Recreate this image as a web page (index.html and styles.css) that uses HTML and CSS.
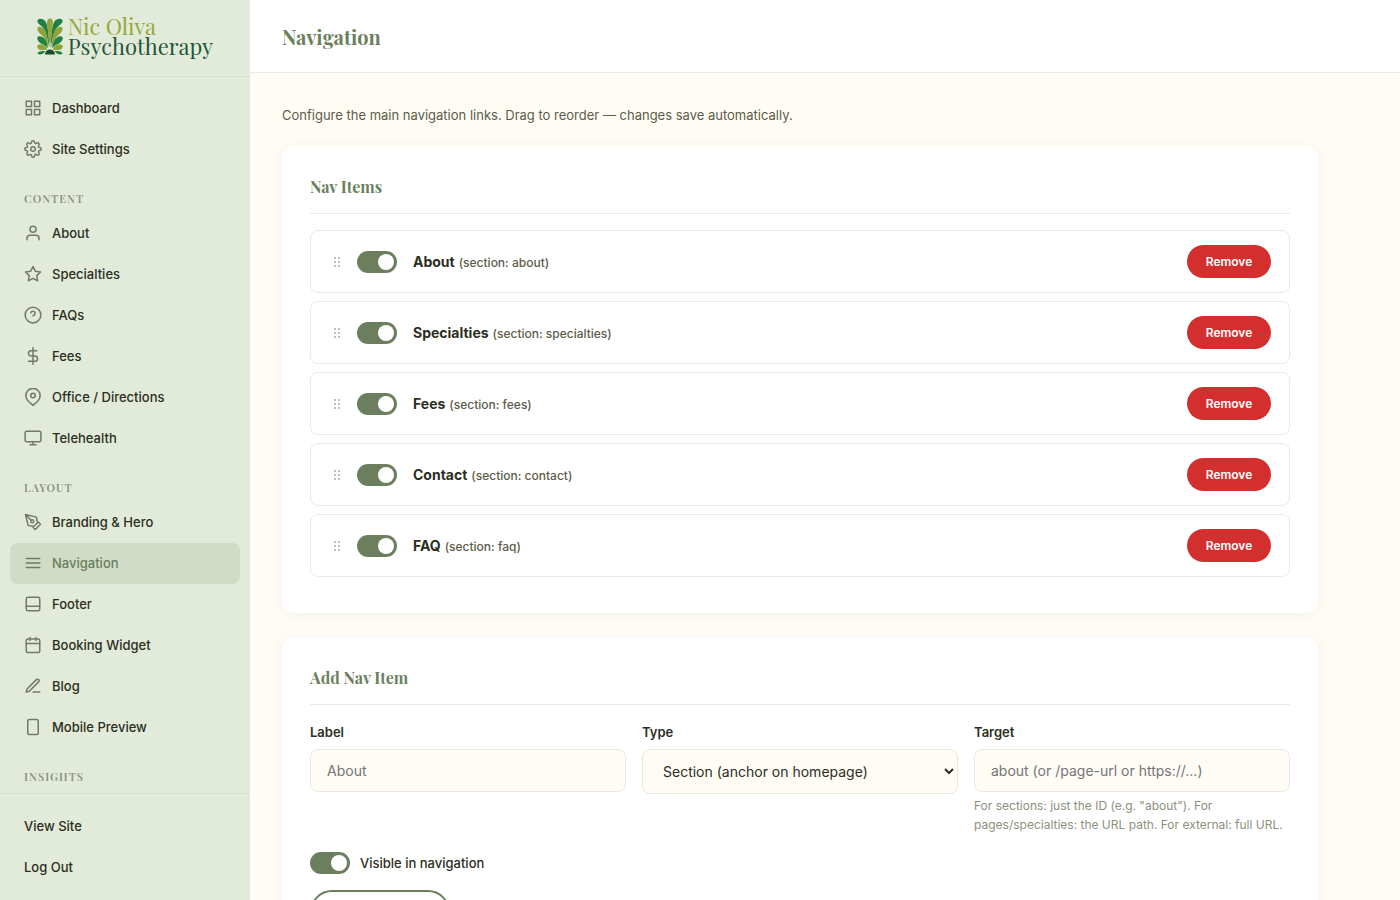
FILE: index.html
```html
<!DOCTYPE html>
<html lang="en">
<head>
<meta charset="utf-8">
<meta name="viewport" content="width=device-width, initial-scale=1">
<title>Navigation</title>
<link rel="stylesheet" href="styles.css">
</head>
<body>
<div class="layout">
  <aside class="sidebar">
    <a class="brand" href="#">
      <svg class="brand-mark" viewBox="0 0 26 37" aria-hidden="true">
        <defs>
          <g id="petals">
            <path class="leaf" d="M.5 2.500C1.500 -.2 6.500 .2 8.500 3.500C11.500 8 11.800 20 12.300 30C10.500 20 9 13 5.500 9C3 6 0 5.500 .5 2.500Z"/>
            <path class="olive" d="M.5 10C1.500 7.500 6 8.500 8.300 12.500C10.300 17 11 24 11.600 30C9.500 24 8 20 5 17.500C2.500 15.500 -.3 13 .5 10Z"/>
            <path class="leaf" d="M.5 19C2.500 17 7 19 8.900 22.500C10.200 25.500 10.500 28 11 30.500C9 28 7.500 27 5 26C2 24.500 -.5 21.500 .5 19Z"/>
            <path class="olive" d="M.5 27.500C3 25 7.500 26.500 9 29C9.600 30 9.900 31 9.800 32C7.500 31.700 5.500 32.400 3.500 32C1 31.500 -.3 29.500 .5 27.500Z"/>
            <path class="leaf" d="M.5 36C.5 33.500 4 32.500 8.500 33.200L7.200 34.500C5 36.700 3 36.700 .5 36Z"/>
          </g>
        </defs>
        <use href="#petals"/>
        <use href="#petals" transform="matrix(-1 0 0 1 26 0)"/>
        <path class="olive" d="M13 .5C16.300 .5 16.300 5 15.500 9L13 30L10.500 9C9.700 5 9.700 .5 13 .5Z"/>
        <path class="pine" d="M8 36.500A5 5 0 0 1 18 36.500Z"/>
      </svg>
      <span class="brand-text"><span class="brand-name">Nic Oliva</span><span class="brand-field">Psychotherapy</span></span>
    </a>
    <nav class="menu">
      <a class="link" href="#"><svg class="icon" viewBox="0 0 24 24"><rect x="3" y="3" width="7" height="7"/><rect x="14" y="3" width="7" height="7"/><rect x="14" y="14" width="7" height="7"/><rect x="3" y="14" width="7" height="7"/></svg>Dashboard</a>
      <a class="link" href="#"><svg class="icon" viewBox="0 0 24 24"><circle cx="12" cy="12" r="3"/><path d="M19.400 15a1.650 1.650 0 0 0 .33 1.820l.06.06a2 2 0 0 1-2.830 2.830l-.06-.06a1.650 1.650 0 0 0-1.820-.33 1.650 1.650 0 0 0-1 1.510V21a2 2 0 0 1-4 0v-.09A1.650 1.650 0 0 0 9 19.400a1.650 1.650 0 0 0-1.820.33l-.06.06a2 2 0 0 1-2.830-2.830l.06-.06a1.650 1.650 0 0 0 .33-1.820 1.650 1.650 0 0 0-1.510-1H3a2 2 0 0 1 0-4h.09A1.650 1.650 0 0 0 4.600 9a1.650 1.650 0 0 0-.33-1.820l-.06-.06a2 2 0 0 1 2.830-2.830l.06.06a1.650 1.650 0 0 0 1.820.33H9a1.650 1.650 0 0 0 1-1.510V3a2 2 0 0 1 4 0v.09a1.650 1.650 0 0 0 1 1.510 1.650 1.650 0 0 0 1.820-.33l.06-.06a2 2 0 0 1 2.830 2.830l-.06.06a1.650 1.650 0 0 0-.33 1.820V9a1.650 1.650 0 0 0 1.510 1H21a2 2 0 0 1 0 4h-.09a1.650 1.650 0 0 0-1.510 1z"/></svg>Site Settings</a>
      <h2 class="group">Content</h2>
      <a class="link" href="#"><svg class="icon" viewBox="0 0 24 24"><path d="M20 21v-2a4 4 0 0 0-4-4H8a4 4 0 0 0-4 4v2"/><circle cx="12" cy="7" r="4"/></svg>About</a>
      <a class="link" href="#"><svg class="icon" viewBox="0 0 24 24"><path d="M12 2l3.090 6.260L22 9.270l-5 4.870 1.180 6.880L12 17.770l-6.180 3.250L7 14.140 2 9.270l6.910-1.010z"/></svg>Specialties</a>
      <a class="link" href="#"><svg class="icon" viewBox="0 0 24 24"><circle cx="12" cy="12" r="10.500"/><path d="M9.090 9a3 3 0 0 1 5.830 1c0 2-3 3-3 3"/></svg>FAQs</a>
      <a class="link" href="#"><svg class="icon" viewBox="0 0 24 24"><path d="M12 1v22M17 5H9.500a3.500 3.500 0 0 0 0 7h5a3.500 3.500 0 0 1 0 7H6"/></svg>Fees</a>
      <a class="link" href="#"><svg class="icon" viewBox="0 0 24 24"><path d="M21.500 10c0 7-9.500 13-9.500 13s-9.500-6-9.500-13a9.500 9.500 0 0 1 19 0z"/><circle cx="12" cy="10" r="3"/></svg>Office / Directions</a>
      <a class="link" href="#"><svg class="icon" viewBox="0 0 24 24"><rect x="1.500" y="3" width="21" height="14" rx="2"/><path d="M8 21h8M12 17v4"/></svg>Telehealth</a>
      <h2 class="group">Layout</h2>
      <a class="link" href="#"><svg class="icon" viewBox="0 0 24 24"><path d="M12 19l7-7 3 3-7 7-3-3zM18 13l-1.500-7.500L2 2l3.500 14.500L13 18l5-5zM2 2l7.586 7.586"/><circle cx="11" cy="11" r="2"/></svg>Branding &amp; Hero</a>
      <a class="link link-active" href="#" aria-current="page"><svg class="icon" viewBox="0 0 24 24"><path d="M3 6h18M3 12h18M3 18h18"/></svg>Navigation</a>
      <a class="link" href="#"><svg class="icon" viewBox="0 0 24 24"><rect x="3" y="3" width="18" height="18" rx="2"/><path d="M3 15h18"/></svg>Footer</a>
      <a class="link" href="#"><svg class="icon" viewBox="0 0 24 24"><rect x="3" y="4" width="18" height="18" rx="2"/><path d="M16 2v4M8 2v4M3 10h18"/></svg>Booking Widget</a>
      <a class="link" href="#"><svg class="icon" viewBox="0 0 24 24"><path d="M12 20h9M16.500 3.500a2.121 2.121 0 0 1 3 3L7 19l-4 1 1-4z"/></svg>Blog</a>
      <a class="link" href="#"><svg class="icon" viewBox="0 0 24 24"><rect x="5" y="2" width="14" height="20" rx="2"/></svg>Mobile Preview</a>
      <h2 class="group">Insights</h2>
    </nav>
    <div class="sidebar-foot">
      <a class="link" href="#">View Site</a>
      <a class="link" href="#">Log Out</a>
    </div>
  </aside>
  <div class="main">
    <header class="topbar"><h1 class="title">Navigation</h1></header>
    <main class="content">
      <p class="intro">Configure the main navigation links. Drag to reorder — changes save automatically.</p>
      <section class="card">
        <h2 class="card-title">Nav Items</h2>
        <ul class="items">
          <li class="item"><svg class="grip" viewBox="0 0 12 12"><path d="M5 1h2v2H5zM9 1h2v2H9zM5 5h2v2H5zM9 5h2v2H9zM5 9h2v2H5zM9 9h2v2H9z"/></svg><input class="toggle" type="checkbox" checked aria-label="Show About"><span class="item-text"><strong class="item-name">About</strong> <span class="item-meta">(section: about)</span></span><button class="remove" type="button">Remove</button></li>
          <li class="item"><svg class="grip" viewBox="0 0 12 12"><path d="M5 1h2v2H5zM9 1h2v2H9zM5 5h2v2H5zM9 5h2v2H9zM5 9h2v2H5zM9 9h2v2H9z"/></svg><input class="toggle" type="checkbox" checked aria-label="Show Specialties"><span class="item-text"><strong class="item-name">Specialties</strong> <span class="item-meta">(section: specialties)</span></span><button class="remove" type="button">Remove</button></li>
          <li class="item"><svg class="grip" viewBox="0 0 12 12"><path d="M5 1h2v2H5zM9 1h2v2H9zM5 5h2v2H5zM9 5h2v2H9zM5 9h2v2H5zM9 9h2v2H9z"/></svg><input class="toggle" type="checkbox" checked aria-label="Show Fees"><span class="item-text"><strong class="item-name">Fees</strong> <span class="item-meta">(section: fees)</span></span><button class="remove" type="button">Remove</button></li>
          <li class="item"><svg class="grip" viewBox="0 0 12 12"><path d="M5 1h2v2H5zM9 1h2v2H9zM5 5h2v2H5zM9 5h2v2H9zM5 9h2v2H5zM9 9h2v2H9z"/></svg><input class="toggle" type="checkbox" checked aria-label="Show Contact"><span class="item-text"><strong class="item-name">Contact</strong> <span class="item-meta">(section: contact)</span></span><button class="remove" type="button">Remove</button></li>
          <li class="item"><svg class="grip" viewBox="0 0 12 12"><path d="M5 1h2v2H5zM9 1h2v2H9zM5 5h2v2H5zM9 5h2v2H9zM5 9h2v2H5zM9 9h2v2H9z"/></svg><input class="toggle" type="checkbox" checked aria-label="Show FAQ"><span class="item-text"><strong class="item-name">FAQ</strong> <span class="item-meta">(section: faq)</span></span><button class="remove" type="button">Remove</button></li>
        </ul>
      </section>
      <section class="card">
        <h2 class="card-title">Add Nav Item</h2>
        <form class="form">
          <div class="fields">
            <div class="field">
              <label class="field-label" for="label">Label</label>
              <input class="control" id="label" type="text" placeholder="About">
            </div>
            <div class="field">
              <label class="field-label" for="type">Type</label>
              <select class="control control-select" id="type"><option>Section (anchor on homepage)</option></select>
            </div>
            <div class="field">
              <label class="field-label" for="target">Target</label>
              <input class="control" id="target" type="text" placeholder="about (or /page-url or https://...)">
              <p class="hint">For sections: just the ID (e.g. "about"). For pages/specialties: the URL path. For external: full URL.</p>
            </div>
          </div>
          <label class="check" for="visible"><input class="toggle" id="visible" type="checkbox" checked>Visible in navigation</label>
          <button class="add" type="button">Add Nav Item</button>
        </form>
      </section>
    </main>
  </div>
</div>
</body>
</html>
```
FILE: styles.css
```css
* { box-sizing: border-box; }

:root {
  --sage: #6b7f5e;
  --ink: #2c2e22;
  --cream: #fffcf5;
  --line: #e9ebe7;
  --serif: "Playfair Display", "Liberation Serif", serif;
}

body {
  margin: 0;
  background: var(--cream);
  color: var(--ink);
  font-family: Inter, sans-serif;
  font-size: 14px;
}

h1, h2, p, ul { margin: 0; padding: 0; }

.layout { display: flex; align-items: flex-start; }

.sidebar {
  position: sticky;
  top: 0;
  display: flex;
  flex-direction: column;
  flex: 0 0 250px;
  height: 100vh;
  background: #e2ebd9;
}

.brand {
  display: flex;
  justify-content: center;
  align-items: center;
  gap: 5px;
  height: 77px;
  padding-bottom: 4px;
  flex-shrink: 0;
  border-bottom: 1px solid #d5dfcb;
  text-decoration: none;
}
.brand-mark { width: 26px; height: 37px; }
.brand-text { display: flex; flex-direction: column; font-family: var(--serif); font-size: 22px; line-height: 20px; }
.brand-name { color: #96a83f; }
.brand-field { color: #1f5738; }
.leaf { fill: #1f8043; }
.olive { fill: #91a43c; }
.pine { fill: #1c4a2c; }

.menu { flex: 1; min-height: 0; overflow: hidden; padding: 11px 10px; }

.link {
  display: flex;
  align-items: center;
  gap: 10px;
  height: 41px;
  padding: 0 14px 1px;
  border-radius: 8px;
  color: var(--ink);
  font-size: 13px;
  font-weight: 500;
  text-decoration: none;
}
.link-active { background: #d1dbc6; color: var(--sage); }

.icon {
  width: 18px;
  height: 18px;
  flex-shrink: 0;
  fill: none;
  stroke: currentColor;
  stroke-width: 2;
  stroke-linecap: round;
  stroke-linejoin: round;
  opacity: 0.6;
}
.link-active .icon { opacity: 1; }

.group {
  height: 43px;
  padding: 21px 14px 0;
  color: #8c917c;
  font-family: var(--serif);
  font-size: 11px;
  font-weight: 600;
  line-height: 16px;
  letter-spacing: 1px;
  text-transform: uppercase;
}

.sidebar-foot { padding: 12px 10px; border-top: 1px solid #d5dfcb; }

.main { flex: 1; min-width: 0; }

.topbar {
  display: flex;
  align-items: center;
  height: 73px;
  padding: 0 32px;
  background: #fff;
  border-bottom: 1px solid var(--line);
}
.title { color: var(--sage); font-family: var(--serif); font-size: 20px; font-weight: 700; }

.content { max-width: 1100px; padding: 32px; }
.intro { margin-bottom: 20px; color: #5c5c48; font-size: 13px; line-height: 21px; }

.card {
  margin-bottom: 24px;
  padding: 28px;
  background: #fff;
  border-radius: 12px;
  box-shadow: 0 2px 12px rgba(107, 127, 94, 0.08);
}
.card-title {
  margin-bottom: 16px;
  padding-bottom: 13px;
  border-bottom: 1px solid var(--line);
  color: var(--sage);
  font-family: var(--serif);
  font-size: 16px;
  font-weight: 700;
  line-height: 26px;
}

.items { list-style: none; }
.item {
  display: flex;
  align-items: center;
  gap: 16px;
  margin-bottom: 8px;
  padding: 14px 18px;
  border: 1px solid var(--line);
  border-radius: 8px;
}
.grip { width: 12px; height: 12px; flex-shrink: 0; fill: #b9c5ad; }
.item-text { flex: 1; }
.item-name { font-size: 14px; font-weight: 700; }
.item-meta { color: #5c5c48; font-size: 12px; font-weight: 500; }

.toggle {
  appearance: none;
  display: flex;
  align-items: center;
  justify-content: flex-end;
  width: 40px;
  height: 22px;
  flex-shrink: 0;
  margin: 0;
  padding: 3px;
  border-radius: 11px;
  background: #c9cfc3;
}
.toggle:checked { background: var(--sage); }
.toggle::before { content: ""; width: 16px; height: 16px; border-radius: 50%; background: #fff; }
.toggle:not(:checked) { justify-content: flex-start; }

.remove {
  min-width: 84px;
  height: 33px;
  padding: 0 16px;
  border: 0;
  border-radius: 17px;
  background: #d32f2f;
  color: #fff;
  font: 600 12px Inter, sans-serif;
}

.fields { display: grid; grid-template-columns: repeat(3, 1fr); gap: 16px; }
.field-label { display: block; margin-bottom: 6px; font-size: 13px; font-weight: 600; line-height: 22px; }
.control {
  display: block;
  width: 100%;
  height: 43px;
  padding: 0 16px;
  border: 1px solid #e5e9df;
  border-radius: 8px;
  background: var(--cream);
  color: var(--ink);
  font: 14px Inter, sans-serif;
}
.control::placeholder { color: #757575; }
.control-select { height: 45px; }
.hint { margin-top: 4px; color: #8c917c; font-size: 12px; line-height: 19px; }

.check { display: flex; align-items: center; gap: 10px; margin: 18px 0 16px; font-size: 13px; font-weight: 500; }
.add {
  padding: 12px 26px;
  border: 2px solid var(--sage);
  border-radius: 24px;
  background: transparent;
  color: var(--sage);
  font: 600 13px Inter, sans-serif;
}
```
